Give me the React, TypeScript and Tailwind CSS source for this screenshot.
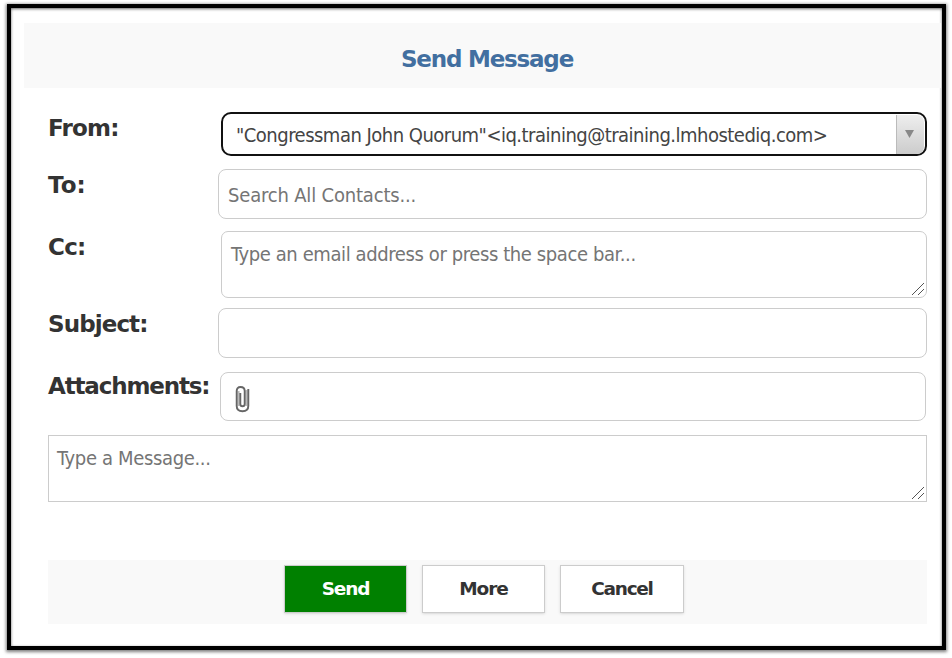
import type { ReactNode } from 'react';

const bold = "font-['DejaVu_Sans',sans-serif] font-bold whitespace-nowrap";
const regular = "font-['DejaVu_Sans_Condensed','DejaVu_Sans',sans-serif] [font-stretch:condensed] whitespace-pre";

function Row({ label, className, tracking, children }: { label: string; className: string; tracking: string; children: ReactNode }) {
  return (
    <div className={`flex items-start justify-between ${className}`}>
      <label className={`${bold} ${tracking} mt-[2px] h-7 w-[170px] shrink-0 text-[23px] leading-7 text-[#333]`}>{label}</label>
      {children}
    </div>
  );
}

function Grip() {
  return (
    <svg className="absolute right-[2px] bottom-[2px] h-[12px] w-[12px]" viewBox="0 0 12 12" fill="none" stroke="#555" strokeWidth="1">
      <path d="M0 12L12 0M6 12l6-6" />
    </svg>
  );
}

function PaperClip() {
  return (
    <svg className="mt-[13px] ml-[14px] h-[27px] w-[15px]" viewBox="0 0 15 27" fill="none">
      <path d="M3.600 5v15M11.500 4v16" stroke="#bbb" strokeWidth="2" />
      <path d="M13.300 3v17c0 3.500-2 5.200-5.800 5.200S1.700 23.500 1.700 20V5c0-2.500 1.300-4 3.800-4S9.700 2.500 9.700 5v13c0 1.500-.7 2.300-2.200 2.300s-2.200-.8-2.200-2.300V7" stroke="#666" strokeWidth="1.900" />
    </svg>
  );
}

export default function App() {
  return (
    <main className="h-[658px] w-[952px] overflow-hidden bg-white pt-[4px] pl-[7px]">
      <div className="h-[646px] w-[939px] border-4 border-black pt-[15px] pl-[13px] shadow-[0_1px_3px_1px_rgba(0,0,0,.5),inset_0_1px_3px_0px_rgba(0,0,0,.6)]">
        <header className="flex h-[65px] w-[917px] items-center justify-center bg-[#f9f9f9] pt-[7px] pl-[9px]">
          <h1 className={`${bold} text-[23px] tracking-[-1.2px] text-[#426fa0]`}>Send Message</h1>
        </header>
        <form className="ml-6 w-[879px] pt-6">
          <Row label="From:" className="h-[57px]" tracking="tracking-[-0.8px]">
            <div className="flex h-11 w-[706px] overflow-hidden rounded-[10px] border-2 border-[#111]">
              <span className={`${regular} flex-1 pl-[13px] text-[20px] leading-[42px] tracking-[-0.51px] text-[#444]`}>"Congressman John Quorum"&lt;iq.training@training.lmhostediq.com&gt;</span>
              <span className="mt-px mr-px flex w-[28px] items-center justify-center rounded-r-[7px] border-l border-[#bbb] bg-gradient-to-b from-[#eee] to-[#ccc] pr-[2px] pb-px">
                <svg className="h-2 w-[9px]" viewBox="0 0 9 8"><path d="M0 0h9L4.500 8z" fill="#888" /></svg>
              </span>
            </div>
          </Row>
          <Row label="To:" className="h-[62px]" tracking="tracking-[0px]">
            <div className={`${regular} h-[50px] w-[709px] rounded-[8px] border border-[#ccc] pl-[9px] text-[20px] leading-[50px] tracking-[-0.18px] text-[#757575]`}>Search All Contacts...</div>
          </Row>
          <Row label="Cc:" className="h-[77px]" tracking="tracking-[-0.7px]">
            <div className={`${regular} relative h-[67px] w-[706px] rounded-[7px] border border-[#ccc] pl-[9px] text-[20px] leading-[45px] tracking-[-0.4px] text-[#757575]`}>Type an email address or press the space bar...<Grip /></div>
          </Row>
          <Row label="Subject:" className="h-[64px]" tracking="tracking-[-0.9px]">
            <div className="h-[50px] w-[709px] rounded-[8px] border border-[#ccc]" />
          </Row>
          <Row label="Attachments:" className="-mt-[2px] mb-[2px] h-[63px] pr-px" tracking="tracking-[-1.15px]">
            <div className="mt-[2px] h-[49px] w-[706px] rounded-[8px] border border-[#ccc]"><PaperClip /></div>
          </Row>
          <div className={`${regular} relative h-[67px] border border-[#ccc] pl-[8px] text-[20px] leading-[45px] tracking-[-0.35px] text-[#757575]`}>Type a Message...<Grip /></div>
          <footer className="mt-[58px] flex h-16 gap-[15px] bg-[#f9f9f9] pt-[5px] pl-[236px]">
            <button type="button" className={`${bold} h-12 w-[123px] border border-[#ccc] bg-[#008000] text-[18.500px] tracking-[-1.2px] text-white shadow-sm`}>Send</button>
            <button type="button" className={`${bold} h-12 w-[123px] border border-[#ccc] bg-white text-[18.500px] tracking-[-1.1px] text-[#333] shadow-sm`}>More</button>
            <button type="button" className={`${bold} h-12 w-[124px] border border-[#ccc] bg-white text-[18.500px] tracking-[-1.3px] text-[#333] shadow-sm`}>Cancel</button>
          </footer>
        </form>
      </div>
    </main>
  );
}
